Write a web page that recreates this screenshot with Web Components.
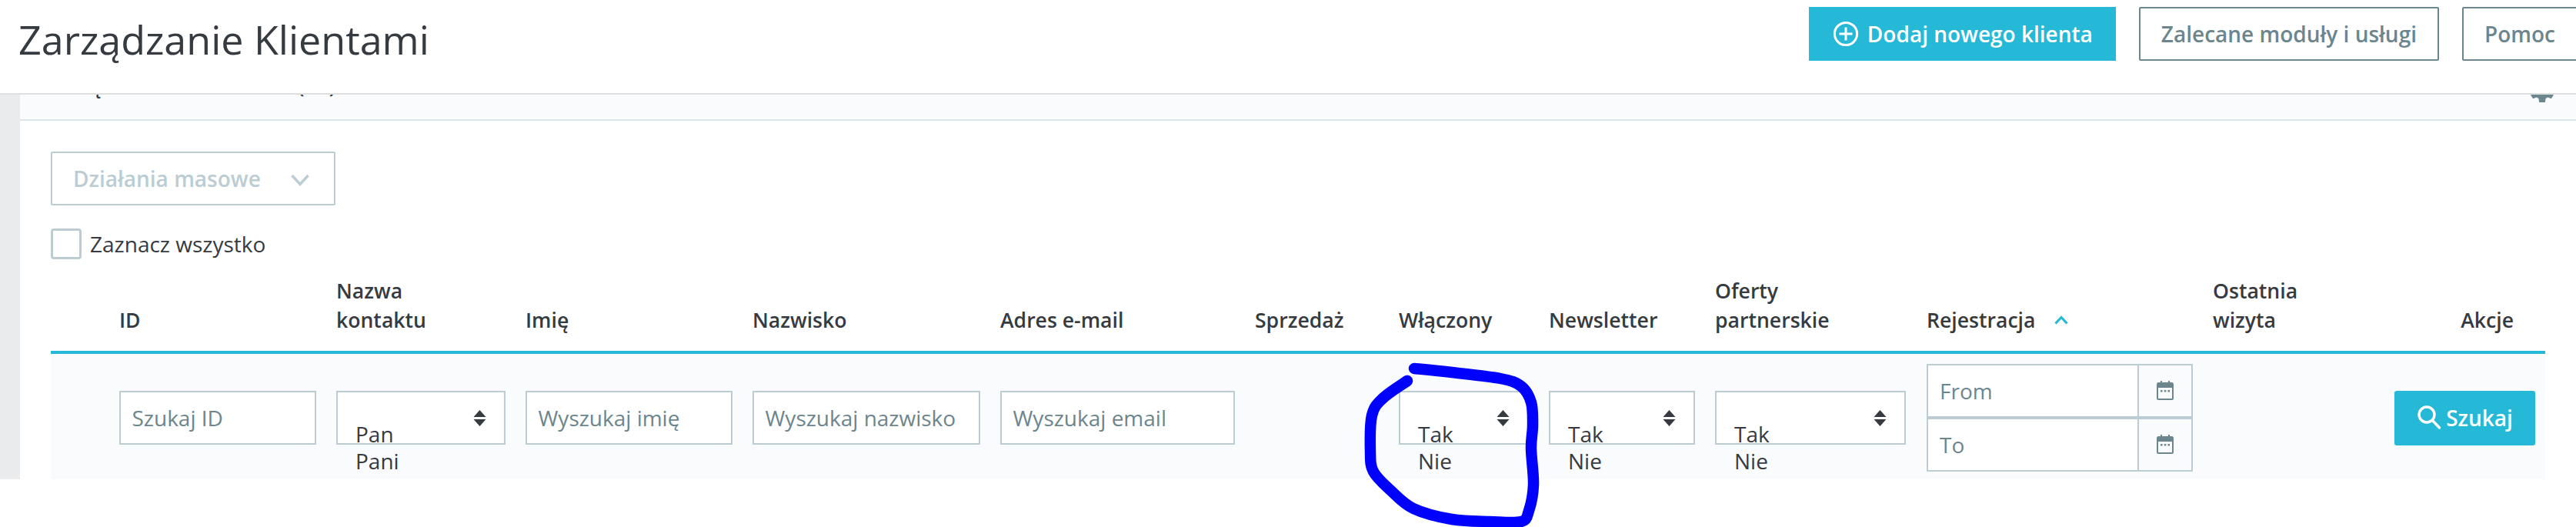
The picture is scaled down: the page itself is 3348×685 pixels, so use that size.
<!DOCTYPE html>
<html lang="pl">
<head>
<meta charset="utf-8">
<title>Zarządzanie Klientami</title>
<style>
html,body{margin:0;padding:0;background:#fff;}
body{width:3348px;height:685px;overflow:hidden;position:relative;font-family:"Open Sans","Liberation Sans",sans-serif;font-size:28px;color:#363a41;}
</style>
</head>
<body>
<ps-header>
  <span slot="title">Zarządzanie Klientami</span>
  <ps-btn variant="primary" icon="plus">Dodaj nowego klienta</ps-btn>
  <ps-btn variant="outline">Zalecane moduły i usługi</ps-btn>
  <ps-btn variant="outline">Pomoc</ps-btn>
</ps-header>
<ps-layout>
  <ps-panel heading="Zarządzanie Klientami (12)">
    <ps-bulk>Działania masowe</ps-bulk>
    <ps-check>Zaznacz wszystko</ps-check>
    <ps-row kind="head">
      <span></span>
      <ps-th>ID</ps-th>
      <ps-th>Nazwa<br>kontaktu</ps-th>
      <ps-th>Imię</ps-th>
      <ps-th>Nazwisko</ps-th>
      <ps-th>Adres e-mail</ps-th>
      <ps-th>Sprzedaż</ps-th>
      <ps-th>Włączony</ps-th>
      <ps-th>Newsletter</ps-th>
      <ps-th>Oferty<br>partnerskie</ps-th>
      <ps-th sorted>Rejestracja</ps-th>
      <ps-th>Ostatnia<br>wizyta</ps-th>
      <ps-th end>Akcje</ps-th>
    </ps-row>
    <ps-row kind="filter">
      <span></span>
      <ps-input>Szukaj ID</ps-input>
      <ps-select><span>Pan</span><span>Pani</span></ps-select>
      <ps-input>Wyszukaj imię</ps-input>
      <ps-input>Wyszukaj nazwisko</ps-input>
      <ps-input>Wyszukaj email</ps-input>
      <span></span>
      <ps-select><span>Tak</span><span>Nie</span></ps-select>
      <ps-select><span>Tak</span><span>Nie</span></ps-select>
      <ps-select><span>Tak</span><span>Nie</span></ps-select>
      <ps-daterange><span slot="from">From</span><span slot="to">To</span></ps-daterange>
      <span></span>
      <ps-btn variant="primary" icon="search" compact>Szukaj</ps-btn>
    </ps-row>
  </ps-panel>
</ps-layout>
<ink-mark></ink-mark>

<script>
function def(name, css, html){
  class C extends HTMLElement{
    constructor(){super();this.attachShadow({mode:'open'});
      this.shadowRoot.innerHTML='<style>'+css+'</style>'+(typeof html==='function'?html(this):html);}
  }
  customElements.define(name,C);
}
const ICONS={
  plus:'<svg width="36" height="36" viewBox="0 0 36 36" fill="none" stroke="#fff"><circle cx="18" cy="18" r="14.6" stroke-width="3"/><path d="M18 9.5v17M9.5 18h17" stroke-width="3"/></svg>',
  search:'<svg width="34" height="34" viewBox="0 0 34 34" fill="none" stroke="#fff" stroke-width="3.4" stroke-linecap="round"><circle cx="13" cy="13" r="10"/><path d="M20.5 20.5L29.5 30"/></svg>'
};
const CAL='<svg width="22" height="25" viewBox="0 0 22 25"><path d="M5 0h2v3H5zM15 0h2v3h-2z" fill="#6c868e"/><rect x="0" y="2" width="22" height="23" rx="2.5" fill="#6c868e"/><rect x="2" y="9" width="18" height="14" fill="#fafbfc"/><path d="M5 12h2.5v2.5H5zM9.8 12h2.5v2.5H9.8zM14.5 12H17v2.5h-2.5z" fill="#6c868e"/></svg>';

def('ps-header',`
  :host{display:flex;align-items:flex-start;box-sizing:border-box;height:123px;border-bottom:2px solid #dfdfdf;background:#fff;padding:9px 0 0 24px;position:relative;z-index:2;overflow:hidden}
  .t{font-size:52px;font-weight:400;line-height:68px;color:#363a41;margin-top:8px;flex:none;white-space:nowrap}
  .a{display:flex;gap:30px;margin-left:auto;margin-right:-2px}
`,`<div class="t"><slot name="title"></slot></div><div class="a"><slot></slot></div>`);

def('ps-btn',`
  :host{display:inline-flex;align-items:center;justify-content:center;box-sizing:border-box;height:70px;padding:0 27px;font-weight:600;font-size:28px;white-space:nowrap;border:2px solid #6c868e;color:#6c868e;background:#fff;border-radius:2px}
  :host([variant=primary]){background:#25b9d7;border-color:#25b9d7;color:#fff;padding:0 28px;border-radius:0}
  :host([compact]){width:183px;height:71px;padding:0;border-radius:3px}
  .i{display:flex;margin-right:10px}
  :host([compact]) .i{margin-right:4px}
  .i:empty{display:none}
`,h=>`<span class="i">${ICONS[h.getAttribute('icon')]||''}</span><slot></slot>`);

def('ps-layout',`
  :host{display:grid;grid-template-columns:26px 1fr;height:500px}
  .s{background:#eaebec}
`,`<div class="s"></div><div><slot></slot></div>`);

def('ps-panel',`
  :host{display:block}
  .head{display:flex;justify-content:space-between;align-items:flex-start;box-sizing:border-box;height:34px;background:#fafbfc;border-bottom:2px solid #dbe6e9;padding:0 24px 0 32px;overflow:hidden}
  h2{margin:-32px 0 0;font-size:28px;line-height:38px;font-weight:600;color:#363a41;white-space:nowrap;word-spacing:11px}
  svg{margin-top:-26px;flex:none}
  .body{padding:40px 40px 0}
`,h=>`<div class="head"><h2>${h.getAttribute('heading')}</h2><svg width="40" height="40" viewBox="0 0 24 24" fill="#6c868e"><path d="M19.14 12.94c.04-.3.06-.61.06-.94 0-.32-.02-.64-.07-.94l2.03-1.58c.18-.14.23-.41.12-.61l-1.92-3.32c-.12-.22-.37-.29-.59-.22l-2.39.96c-.5-.38-1.03-.7-1.62-.94l-.36-2.54c-.04-.24-.24-.41-.48-.41h-3.84c-.24 0-.43.17-.47.41l-.36 2.54c-.59.24-1.13.57-1.62.94l-2.39-.96c-.22-.08-.47 0-.59.22L2.74 8.87c-.12.21-.08.47.12.61l2.03 1.58c-.05.3-.09.63-.09.94s.02.64.07.94l-2.03 1.58c-.18.14-.23.41-.12.61l1.92 3.32c.12.22.37.29.59.22l2.39-.96c.5.38 1.03.7 1.62.94l.36 2.54c.05.24.24.41.48.41h3.84c.24 0 .44-.17.47-.41l.36-2.54c.59-.24 1.13-.56 1.62-.94l2.39.96c.22.08.47 0 .59-.22l1.92-3.32c.12-.22.07-.47-.12-.61l-2.01-1.58zM12 15.6c-1.98 0-3.6-1.62-3.6-3.6s1.62-3.6 3.6-3.6 3.6 1.62 3.6 3.6-1.62 3.6-3.6 3.6z"/></svg></div><div class="body"><slot></slot></div>`);

def('ps-bulk',`
  :host{display:flex;align-items:center;justify-content:space-between;box-sizing:border-box;width:370px;height:70px;border:2px solid #bbcdd2;border-radius:2px;padding:0 32px 0 27px;font-weight:600;font-size:28px;color:#bbcdd2;white-space:nowrap}
`,`<slot></slot><svg width="24" height="16" viewBox="0 0 24 16" fill="none" stroke="#bbcdd2" stroke-width="3.4" style="margin-top:4px"><path d="M1.5 2L12 13.5 22.5 2"/></svg>`);

def('ps-check',`
  :host{display:flex;align-items:center;gap:11px;margin-top:30px;height:40px;font-size:28px;color:#363a41}
  i{display:block;box-sizing:border-box;width:40px;height:40px;border:3px solid #bbcdd2;border-radius:4px;background:#fff}
`,`<i></i><slot></slot>`);

def('ps-row',`
  :host{display:grid;grid-template-columns:63px 256px 220px 269px 296px 305px 161px 169px 190px 248px 347px 210px 183px;column-gap:26px;padding-right:13px}
  :host([kind=head]){height:123px;box-sizing:border-box;align-items:end;padding-bottom:21px;border-bottom:4px solid #25b9d7}
  :host([kind=filter]){background:#fafbfc;align-items:center;padding-top:13px;padding-bottom:10px}
`,`<slot></slot>`);

def('ps-th',`
  :host{display:flex;align-items:center;gap:25px;font-weight:600;font-size:26.6px;line-height:38px;color:#363a41;white-space:nowrap}
  :host([end]){justify-content:flex-end;padding-right:28px}
  :host([sorted]){padding-left:1px}
  svg{display:none}
  :host([sorted]) svg{display:block}
`,`<div><slot></slot></div><svg width="18" height="12" viewBox="0 0 18 12" fill="none" stroke="#25b9d7" stroke-width="3.2"><path d="M1.5 10.5L9 2.5l7.500 8"/></svg>`);

def('ps-input',`
  :host{display:flex;align-items:center;box-sizing:border-box;height:70px;border:2px solid #bbcdd2;background:#fff;padding:0 15px 0 14.5px;font-size:28px;color:#6c868e;white-space:nowrap;overflow:hidden}
`,`<slot></slot>`);

def('ps-select',`
  :host{display:block;box-sizing:border-box;height:70px;border:2px solid #bbcdd2;background:#fff;position:relative;font-size:28px;line-height:35px;color:#363a41}
  .l{display:flex;flex-direction:column;padding:37px 0 0 23px}
  svg{position:absolute;right:23px;top:23px}
  ::slotted(span){display:block;height:35px}
`,`<div class="l"><slot></slot></div><svg width="17" height="21" viewBox="0 0 17 21" fill="#363a41"><path d="M8.500 0L16.500 9H.5zM.5 12h16L8.500 21z"/></svg>`);

def('ps-daterange',`
  :host{display:block;font-size:28px;color:#6c868e;margin-left:1px}
  .r{display:flex;box-sizing:border-box;height:70px;border:2px solid #bbcdd2}
  .f{flex:1;display:flex;align-items:center;padding:0 15px;background:#fff}
  .c{flex:none;width:70px;display:flex;align-items:center;justify-content:center;border-left:2px solid #bbcdd2;box-sizing:border-box;padding-bottom:2px}
`,`<div class="r"><div class="f"><slot name="from"></slot></div><div class="c">${CAL}</div></div><div class="r"><div class="f"><slot name="to"></slot></div><div class="c">${CAL}</div></div>`);

const PTS=[[1838,479],[1887,484],[1950,492],[1977,502],[1990,523],[1992,553],[1990,583],[1993,630],[1987,664],[1977,678],[1937,678],[1887,675],[1837,661],[1807,637],[1785,613],[1781,587],[1783,540],[1797,518],[1829,495]];
function spline(p){
  let d='M'+p[0].join(' ');
  for(let i=0;i<p.length-1;i++){
    const a=p[i-1]||p[i],b=p[i],c=p[i+1],e=p[i+2]||c;
    const c1=[b[0]+(c[0]-a[0])/6,b[1]+(c[1]-a[1])/6],c2=[c[0]-(e[0]-b[0])/6,c[1]-(e[1]-b[1])/6];
    d+='C'+c1.map(n=>n.toFixed(1)).join(' ')+' '+c2.map(n=>n.toFixed(1)).join(' ')+' '+c.join(' ');
  }
  return d;
}
def('ink-mark',`
  :host{position:absolute;inset:0;z-index:3;pointer-events:none;display:block}
  svg{display:block}
`,`<svg width="3348" height="685" viewBox="0 0 3348 685" fill="none"><path d="${spline(PTS)}" stroke="#0000ff" stroke-width="14.5" stroke-linecap="round" stroke-linejoin="round"/></svg>`);
</script>
</body>
</html>
